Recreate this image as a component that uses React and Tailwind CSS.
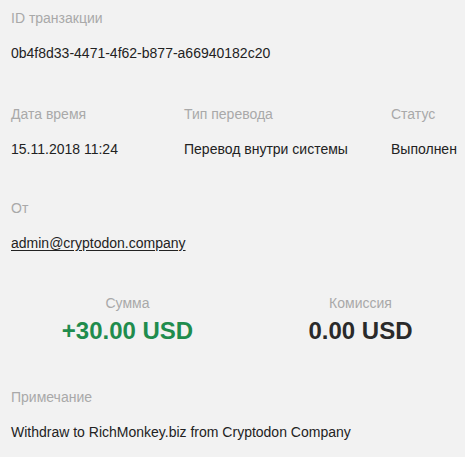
export default function App() {
  const label = "text-[14px] leading-[20px] text-[#a9a9a9]";
  const value = "text-[14px] leading-[20px] text-[#222222]";
  return (
    <div
      className="w-[465px] h-[457px] overflow-hidden bg-[#f2f2f2] pl-[11px] pt-[8px]"
      style={{ fontFamily: '"Liberation Sans", Arial, sans-serif' }}
    >
      <div className={label}>ID транзакции</div>
      <div className={`${value} mt-[15px]`}>0b4f8d33-4471-4f62-b877-a66940182c20</div>

      <div className="flex mt-[41px]">
        <div className="w-[173px] shrink-0">
          <div className={label}>Дата время</div>
          <div className={`${value} mt-[15px]`}>15.11.2018 11:24</div>
        </div>
        <div className="w-[207px] shrink-0">
          <div className={label}>Тип перевода</div>
          <div className={`${value} mt-[15px]`}>Перевод внутри системы</div>
        </div>
        <div className="w-[100px] shrink-0">
          <div className={label}>Статус</div>
          <div className={`${value} mt-[15px]`}>Выполнен</div>
        </div>
      </div>

      <div className={`${label} mt-[39px]`}>От</div>
      <div className={`${value} mt-[15px]`}>
        <span className="underline underline-offset-[2px]">admin@cryptodon.company</span>
      </div>

      <div className="flex mt-[40px] w-[466px]">
        <div className="w-[233px] shrink-0 flex flex-col items-center">
          <div className={label}>Сумма</div>
          <div className="mt-[4px] text-[24px] leading-[28px] font-bold text-[#1f8c4d]">+30.00 USD</div>
        </div>
        <div className="w-[233px] shrink-0 flex flex-col items-center">
          <div className={label}>Комиссия</div>
          <div className="mt-[4px] text-[24px] leading-[28px] font-bold text-[#2a2a2a]">0.00 USD</div>
        </div>
      </div>

      <div className={`${label} mt-[42px]`}>Примечание</div>
      <div className={`${value} mt-[15px]`}>Withdraw to RichMonkey.biz from Cryptodon Company</div>
    </div>
  );
}
